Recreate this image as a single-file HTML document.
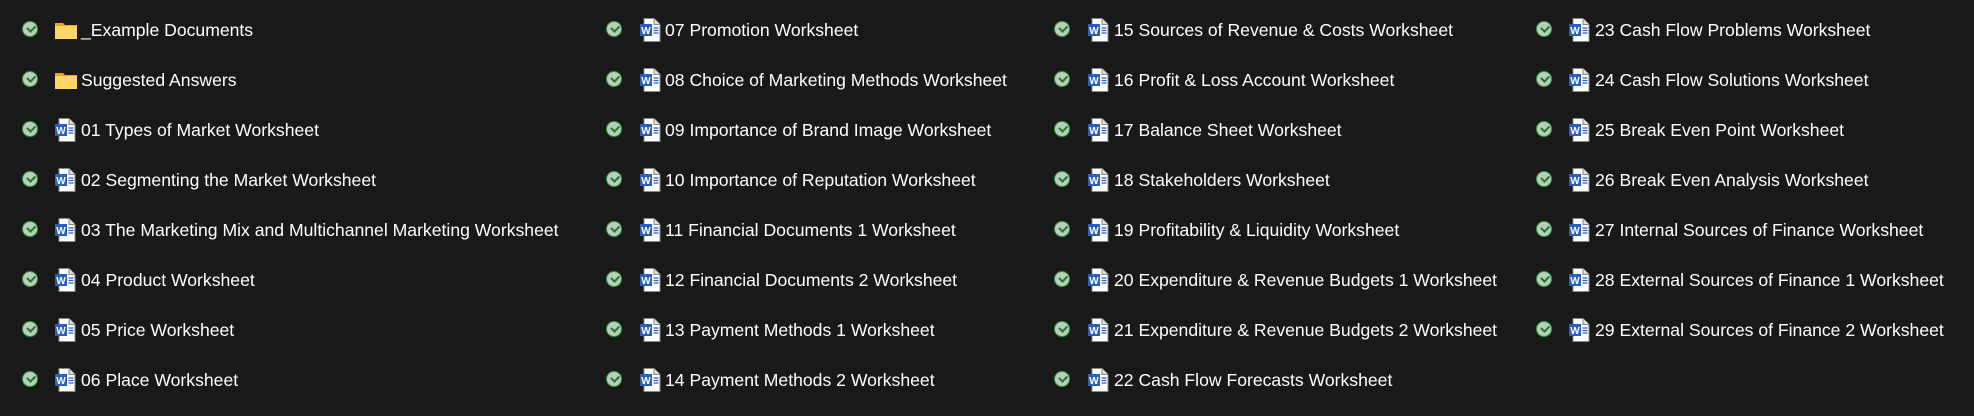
<!DOCTYPE html>
<html><head><meta charset="utf-8"><style>
body{margin:0;width:1974px;height:416px;background:#191919;overflow:hidden;font-family:"Liberation Sans",sans-serif;}
.i{position:absolute;height:24px;display:flex;align-items:center;color:#fff;font-size:17.6px;white-space:nowrap;}
.c{position:absolute;width:14px;height:14px;border-radius:50%;border:1.5px solid #2f9a3c;background:#b9cdbb;}
.c:after{content:"";position:absolute;left:3.5px;top:2.5px;width:6px;height:3.5px;border-left:2px solid #1f7a2c;border-bottom:2px solid #1f7a2c;transform:rotate(-45deg);}
svg{position:absolute;}
</style></head><body>
<div id="r"></div>
<script>
const cols=[
 {c:30,i:55,t:81,items:["F_Example Documents","FSuggested Answers","01 Types of Market Worksheet","02 Segmenting the Market Worksheet","03 The Marketing Mix and Multichannel Marketing Worksheet","04 Product Worksheet","05 Price Worksheet","06 Place Worksheet"]},
 {c:614,i:640,t:665,items:["07 Promotion Worksheet","08 Choice of Marketing Methods Worksheet","09 Importance of Brand Image Worksheet","10 Importance of Reputation Worksheet","11 Financial Documents 1 Worksheet","12 Financial Documents 2 Worksheet","13 Payment Methods 1 Worksheet","14 Payment Methods 2 Worksheet"]},
 {c:1062,i:1088,t:1114,items:["15 Sources of Revenue & Costs Worksheet","16 Profit & Loss Account Worksheet","17 Balance Sheet Worksheet","18 Stakeholders Worksheet","19 Profitability & Liquidity Worksheet","20 Expenditure & Revenue Budgets 1 Worksheet","21 Expenditure & Revenue Budgets 2 Worksheet","22 Cash Flow Forecasts Worksheet"]},
 {c:1544,i:1569,t:1595,items:["23 Cash Flow Problems Worksheet","24 Cash Flow Solutions Worksheet","25 Break Even Point Worksheet","26 Break Even Analysis Worksheet","27 Internal Sources of Finance Worksheet","28 External Sources of Finance 1 Worksheet","29 External Sources of Finance 2 Worksheet"]}];
const folder='<svg width="22" height="18" viewBox="0 0 22 18"><path d="M0 2h8l2 2h12v14H0z" fill="#e8a917"/><path d="M0 5h22v13H0z" fill="#ffd566"/></svg>';
const doc='<svg width="21" height="24" viewBox="0 0 21 24"><path d="M4 .5h10l6 6v17H4z" fill="#fff" stroke="#888"/><path d="M14 .5v6h6" fill="#ddd" stroke="#888"/><rect x="0" y="6" width="12" height="12" fill="#2b5fbd"/><text x="6" y="16" font-size="10" font-weight="bold" fill="#fff" text-anchor="middle" font-family="Liberation Sans">W</text><path d="M13.5 10h5M13.5 12.5h5M13.5 15h5" stroke="#2b5fbd" stroke-width="1.2"/></svg>';
let h='';
cols.forEach(col=>col.items.forEach((s,k)=>{
 const y=30+50*k;
 h+=`<div class="c" style="left:${col.c-8}px;top:${y-9}px"></div>`;
 let f=s[0]=='F';let txt=f?s.slice(1):s;
 h+=`<div style="position:absolute;left:${col.i}px;top:${y-12}px">${f?'<div style="position:absolute;top:3px">'+folder+'</div>':doc}</div>`;
 h+=`<div class="i" style="left:${col.t}px;top:${y-12}px">${txt.replace(/&/g,'&amp;')}</div>`;
}));
document.getElementById('r').innerHTML=h;
</script>
</body></html>
